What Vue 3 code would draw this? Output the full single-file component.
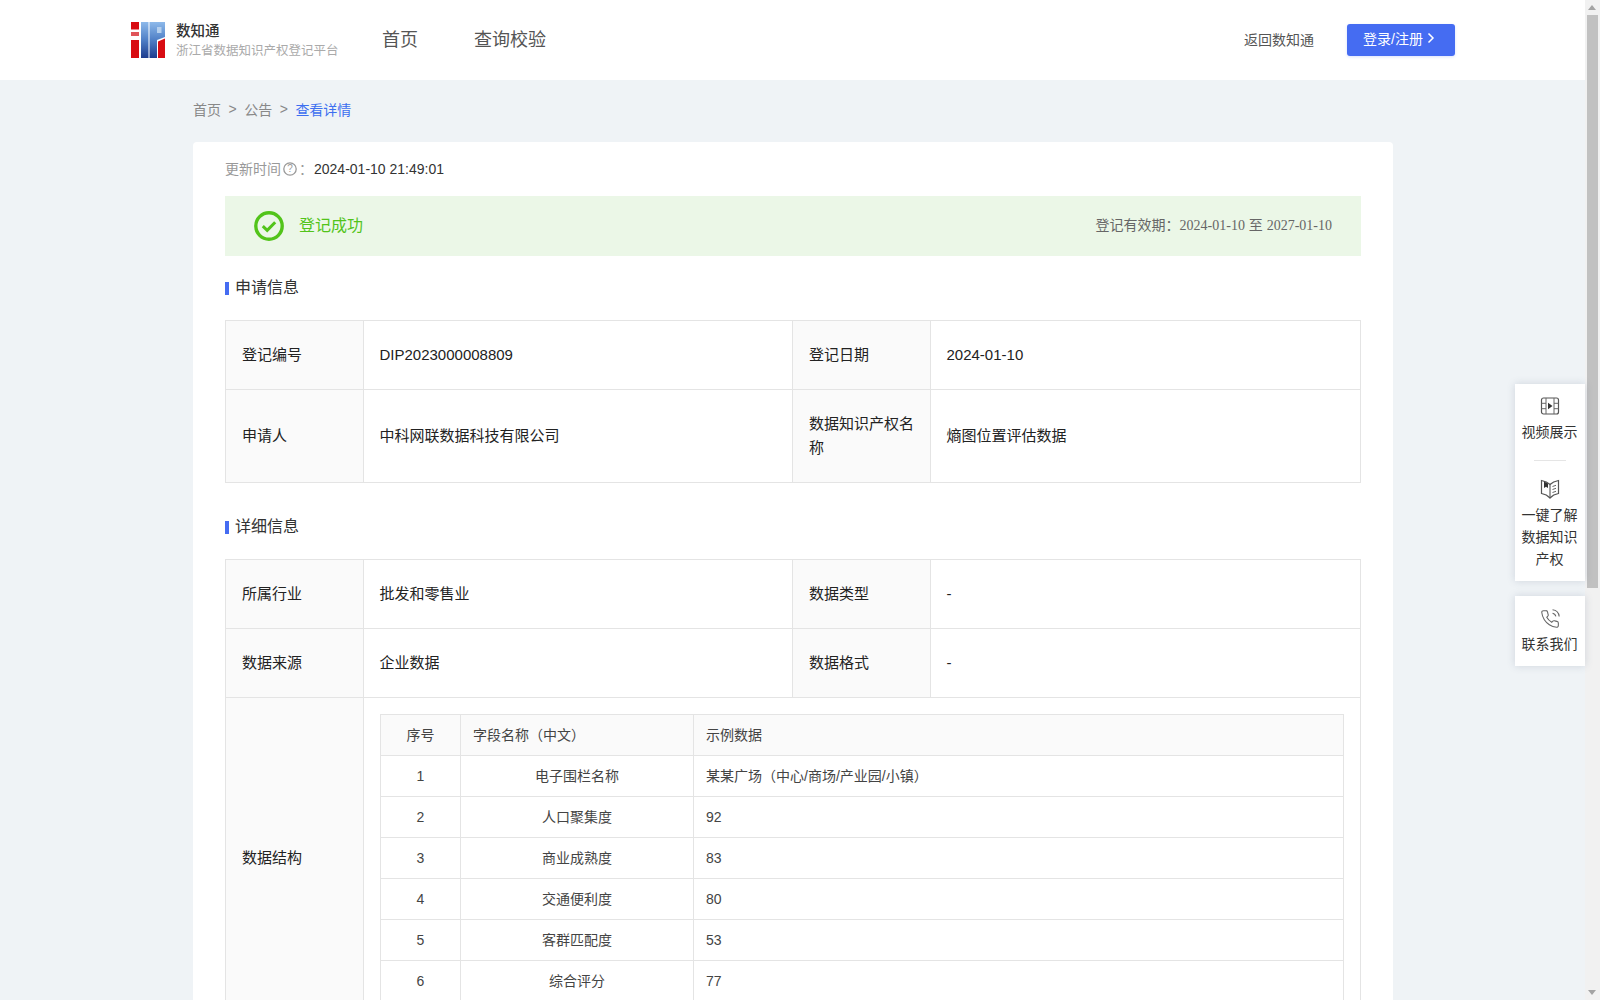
<script setup>
// 面包屑
const crumbs = ['首页', '公告']

// 表格数据
const fields = [
  { no: 1, name: '电子围栏名称', sample: '某某广场（中心/商场/产业园/小镇）' },
  { no: 2, name: '人口聚集度', sample: '92' },
  { no: 3, name: '商业成熟度', sample: '83' },
  { no: 4, name: '交通便利度', sample: '80' },
  { no: 5, name: '客群匹配度', sample: '53' },
  { no: 6, name: '综合评分', sample: '77' }
]
</script>

<template>
  <div class="page">
    <div class="main">
      <!-- 顶部导航 -->
      <header class="header">
        <div class="brand">
          <svg class="logo" width="34" height="36" viewBox="0 0 34 36">
            <defs>
              <linearGradient id="logoBlue" x1="0" y1="0" x2="0" y2="1">
                <stop offset="0" stop-color="#8db9ea" />
                <stop offset="0.5" stop-color="#4f7fc6" />
                <stop offset="1" stop-color="#1d3c8e" />
              </linearGradient>
            </defs>
            <rect x="0" y="0" width="8" height="7.5" fill="#d80c12" />
            <rect x="0" y="10" width="8" height="4" fill="#e0555a" />
            <rect x="0" y="18" width="8" height="18" fill="#d80c12" />
            <rect x="10" y="0" width="7.5" height="36" fill="url(#logoBlue)" />
            <path d="M18.5 0H34V15L26 18V36H18.5Z" fill="url(#logoBlue)" />
            <rect x="26" y="5" width="4.5" height="6" fill="#b4cfee" />
            <path d="M27 19.5L34 16.5V36H27Z" fill="#d80c12" />
          </svg>
          <div class="brand-text">
            <div class="brand-name">数知通</div>
            <div class="brand-sub">浙江省数据知识产权登记平台</div>
          </div>
        </div>
        <nav class="nav">
          <a class="nav-item">首页</a>
          <a class="nav-item">查询校验</a>
        </nav>
        <div class="header-right">
          <a class="back-link">返回数知通</a>
          <button class="login-btn">
            登录/注册
            <svg width="8" height="12" viewBox="0 0 8 12">
              <path d="M1.5 1.5L6 6L1.5 10.5" fill="none" stroke="#fff" stroke-width="1.5" />
            </svg>
          </button>
        </div>
      </header>

      <div class="content">
        <!-- 面包屑 -->
        <div class="breadcrumb">
          <template v-for="item in crumbs" :key="item">
            <span>{{ item }}</span>
            <span class="sep">&gt;</span>
          </template>
          <span class="current">查看详情</span>
        </div>

        <div class="card">
          <div class="update-row">
            <span class="update-label">更新时间</span>
            <svg class="help" width="14" height="14" viewBox="0 0 14 14">
              <circle cx="7" cy="7" r="6.2" fill="none" stroke="#999" stroke-width="1.3" />
              <text x="7" y="10.4" text-anchor="middle" class="help-mark">?</text>
            </svg>
            <span class="update-label colon">：</span>
            <span class="update-time">2024-01-10 21:49:01</span>
          </div>

          <!-- 登记状态 -->
          <div class="status">
            <div class="status-left">
              <svg width="30" height="30" viewBox="0 0 30 30">
                <circle cx="15" cy="15" r="13.2" fill="none" stroke="#52c41a" stroke-width="3.4" />
                <path d="M8.8 15.2L13.2 19.4L21.2 11.2" fill="none" stroke="#52c41a" stroke-width="3" />
              </svg>
              <span class="status-text">登记成功</span>
            </div>
            <div class="status-right">
              登记有效期：<span class="serif">2024-01-10</span> 至 <span class="serif">2027-01-10</span>
            </div>
          </div>

          <!-- 申请信息 -->
          <h3 class="section-title first">申请信息</h3>
          <table class="info-table">
            <colgroup>
              <col class="col-label" />
              <col class="col-value" />
              <col class="col-label" />
              <col />
            </colgroup>
            <tbody>
              <tr>
                <td class="label">登记编号</td>
                <td>DIP2023000008809</td>
                <td class="label">登记日期</td>
                <td>2024-01-10</td>
              </tr>
              <tr>
                <td class="label">申请人</td>
                <td>中科网联数据科技有限公司</td>
                <td class="label">数据知识产权名称</td>
                <td>熵图位置评估数据</td>
              </tr>
            </tbody>
          </table>

          <!-- 详细信息 -->
          <h3 class="section-title">详细信息</h3>
          <table class="info-table">
            <colgroup>
              <col class="col-label" />
              <col class="col-value" />
              <col class="col-label" />
              <col />
            </colgroup>
            <tbody>
              <tr>
                <td class="label">所属行业</td>
                <td>批发和零售业</td>
                <td class="label">数据类型</td>
                <td>-</td>
              </tr>
              <tr>
                <td class="label">数据来源</td>
                <td>企业数据</td>
                <td class="label">数据格式</td>
                <td>-</td>
              </tr>
              <tr>
                <td class="label">数据结构</td>
                <td colspan="3" class="nested">
                  <table class="field-table">
                    <colgroup>
                      <col class="col-no" />
                      <col class="col-name" />
                      <col />
                    </colgroup>
                    <thead>
                      <tr>
                        <th class="center">序号</th>
                        <th>字段名称（中文）</th>
                        <th>示例数据</th>
                      </tr>
                    </thead>
                    <tbody>
                      <tr v-for="row in fields" :key="row.no">
                        <td class="center">{{ row.no }}</td>
                        <td class="center">{{ row.name }}</td>
                        <td>{{ row.sample }}</td>
                      </tr>
                    </tbody>
                  </table>
                </td>
              </tr>
            </tbody>
          </table>
        </div>
      </div>
    </div>

    <!-- 右侧悬浮栏 -->
    <aside class="float-bar">
      <div class="float-panel">
        <div class="float-item">
          <svg width="20" height="18" viewBox="0 0 20 18">
            <rect x="1.5" y="1" width="17" height="16" rx="2" fill="none" stroke="#555" stroke-width="1.2" />
            <path d="M6 1V17M14 1V17M1.5 6.3H6M1.5 11.7H6M14 6.3H18.5M14 11.7H18.5" stroke="#666" stroke-width="1" />
            <path d="M8 5.8V12.2L12.5 9Z" fill="#333" />
          </svg>
          <span>视频展示</span>
        </div>
        <div class="float-divider"></div>
        <div class="float-item book">
          <svg width="20" height="20" viewBox="0 0 20 20">
            <path d="M10 5.5C8 3.5 4.5 2 1.5 1.5V14.5C4.5 15 8 16.8 10 19C12 16.8 15.5 15 18.5 14.5V1.5C15.5 2 12 3.5 10 5.5Z" fill="none" stroke="#555" stroke-width="1.2" />
            <path d="M10 5.5V19" stroke="#555" stroke-width="1.1" />
            <path d="M4 2.5L8 4.5V9L6 7.8L4 9Z" fill="#333" />
            <path d="M12.5 7.5L16 6.3M12.5 10.5L16 9.3M12.5 13.5L16 12.3" stroke="#666" stroke-width="1" fill="none" />
          </svg>
          <span>一键了解数据知识产权</span>
        </div>
      </div>
      <div class="float-panel single">
        <div class="float-item">
          <svg width="20" height="20" viewBox="0 0 24 24" fill="none" stroke="#666" stroke-width="1.3">
            <path d="M22 16.92v3a2 2 0 0 1-2.18 2 19.79 19.79 0 0 1-8.63-3.07 19.5 19.5 0 0 1-6-6 19.79 19.79 0 0 1-3.07-8.67A2 2 0 0 1 4.11 2h3a2 2 0 0 1 2 1.72 12.84 12.84 0 0 0 .7 2.81 2 2 0 0 1-.45 2.11L8.09 9.91a16 16 0 0 0 6 6l1.27-1.27a2 2 0 0 1 2.11-.45 12.84 12.84 0 0 0 2.81.7A2 2 0 0 1 22 16.92z" />
            <path d="M15.05 5A5 5 0 0 1 19 8.95M15.05 1A9 9 0 0 1 23 8.94" />
          </svg>
          <span>联系我们</span>
        </div>
      </div>
    </aside>

    <!-- 滚动条 -->
    <div class="scrollbar">
      <div class="scroll-arrow up"></div>
      <div class="scroll-thumb"></div>
      <div class="scroll-rest"></div>
      <div class="scroll-arrow down"></div>
    </div>
  </div>
</template>

<style scoped>
.page {
  position: relative;
  display: flex;
  width: 1600px;
  height: 1000px;
  overflow: hidden;
  background: #eff3f6;
  font-family: "Liberation Sans", "Noto Sans CJK SC", sans-serif;
  font-size: 14px;
  color: #333;
}

.main {
  flex: 1;
  min-width: 0;
  height: 1000px;
  overflow: hidden;
}

/* 顶部 */
.header {
  display: flex;
  align-items: center;
  height: 80px;
  padding: 0 130px 0 131px;
  background: #fff;
}

.brand {
  display: flex;
  align-items: center;
  gap: 11px;
  width: 251px;
}

.brand-text {
  padding-top: 2px;
}

.brand-name {
  font-size: 14.5px;
  line-height: 20px;
  font-weight: 500;
  color: #333;
}

.brand-sub {
  font-size: 12.5px;
  line-height: 20px;
  color: #aaa;
  white-space: nowrap;
}

.nav {
  display: flex;
  gap: 56px;
  padding-bottom: 4px;
}

.nav-item {
  font-size: 18px;
  color: #555;
}

.header-right {
  display: flex;
  align-items: center;
  gap: 33px;
  margin-left: auto;
}

.back-link {
  padding-bottom: 2px;
  color: #555;
}

.login-btn {
  display: flex;
  align-items: center;
  justify-content: space-between;
  width: 108px;
  height: 32px;
  padding: 0 20px 4px 16px;
  border: none;
  border-radius: 3px;
  background: #456cf2;
  color: #fff;
  font: inherit;
  box-shadow: 0 1px 3px rgba(69, 108, 242, 0.2);
}

/* 内容区 */
.content {
  width: 1200px;
  margin-left: 193px;
}

.breadcrumb {
  display: flex;
  align-items: center;
  height: 58px;
  padding-bottom: 4px;
  color: #888;
}

.sep {
  margin: 0 7.5px;
}

.current {
  color: #3d6ff0;
}

.card {
  padding: 16px 32px;
  border-radius: 4px 4px 0 0;
  background: #fff;
}

.update-row {
  display: flex;
  align-items: center;
  height: 22px;
  margin-bottom: 16px;
}

.update-label {
  padding-bottom: 2px;
  color: #999;
}

.help {
  margin-left: 2px;
}

.help-mark {
  font-size: 10px;
  fill: #999;
}

.colon {
  box-sizing: border-box;
  width: 17px;
  padding-left: 2px;
}

.update-time {
  color: #333;
}

.status {
  display: flex;
  align-items: center;
  justify-content: space-between;
  height: 60px;
  padding: 0 29px;
  background: #ebf7e7;
}

.status-left {
  display: flex;
  align-items: center;
  gap: 15px;
}

.status-text {
  padding-bottom: 5px;
  font-size: 16px;
  color: #52c41a;
}

.status-right {
  padding-bottom: 4px;
  color: #666;
}

.serif {
  font-family: "Liberation Serif", "Noto Sans CJK SC", serif;
}

.section-title {
  position: relative;
  margin: 32px 0 21px;
  padding: 1px 0 0 10px;
  font-size: 16px;
  font-weight: 400;
  line-height: 22px;
  color: #333;
}

.section-title.first {
  margin: 20px 0 21px;
}

.section-title::before {
  content: "";
  position: absolute;
  left: 0;
  top: 6px;
  width: 4px;
  height: 13px;
  background: #456cf2;
}

/* 表格 */
.info-table {
  width: 1136px;
  border-collapse: collapse;
  table-layout: fixed;
  font-size: 15px;
  color: #222;
}

.col-label {
  width: 138px;
}

.col-value {
  width: 429px;
}

.info-table > tbody > tr > td {
  padding: 22px 16px 22px 15.5px;
  border: 1px solid #e4e4e4;
  line-height: 24px;
}

.info-table > tbody > tr > td.label {
  padding-left: 16px;
  background: #fafafa;
}

.info-table > tbody > tr > td.nested {
  padding: 16px;
}

.field-table {
  width: 100%;
  border-collapse: collapse;
  table-layout: fixed;
  font-size: 14px;
  color: #444;
}

.col-no {
  width: 80px;
}

.col-name {
  width: 233px;
}

.field-table th,
.field-table td {
  height: 41px;
  padding: 0 12px 1px;
  border: 1px solid #e4e4e4;
  font-weight: 400;
  text-align: left;
  box-sizing: border-box;
}

.field-table th {
  background: #fafafa;
}

.field-table .center {
  text-align: center;
}

/* 悬浮栏 */
.float-bar {
  position: absolute;
  top: 384px;
  right: 15px;
  display: flex;
  flex-direction: column;
  gap: 15px;
  width: 70px;
}

.float-panel {
  display: flex;
  flex-direction: column;
  align-items: center;
  height: 197px;
  padding-top: 13px;
  background: #fff;
  box-shadow: 0 0 8px rgba(60, 80, 110, 0.18);
  box-sizing: border-box;
}

.float-panel.single {
  height: 70px;
}

.float-item {
  display: flex;
  flex-direction: column;
  align-items: center;
  width: 56px;
  line-height: 22px;
  text-align: center;
  color: #333;
}

.float-item span {
  margin: 6px 0 0 -1px;
}

.float-item.book span {
  margin-top: 5px;
}

.float-panel.single span {
  margin-top: 4px;
}

.float-divider {
  flex: none;
  width: 32px;
  height: 1px;
  margin: 17px 0 18px;
  background: #e5e5e5;
}

/* 滚动条 */
.scrollbar {
  display: flex;
  flex-direction: column;
  flex: none;
  width: 15px;
  height: 1000px;
  background: #f1f1f1;
}

.scroll-arrow {
  position: relative;
  flex: none;
  height: 15px;
}

.scroll-arrow::after {
  content: "";
  position: absolute;
  left: 3px;
  top: 5px;
  border-left: 4.5px solid transparent;
  border-right: 4.5px solid transparent;
}

.scroll-arrow.up::after {
  border-bottom: 5px solid #a3a3a3;
}

.scroll-arrow.down::after {
  border-top: 5px solid #a3a3a3;
}

.scroll-thumb {
  flex: none;
  height: 573px;
  margin: 0 2px;
  background: #c1c1c1;
}

.scroll-rest {
  flex: 1;
}
</style>
